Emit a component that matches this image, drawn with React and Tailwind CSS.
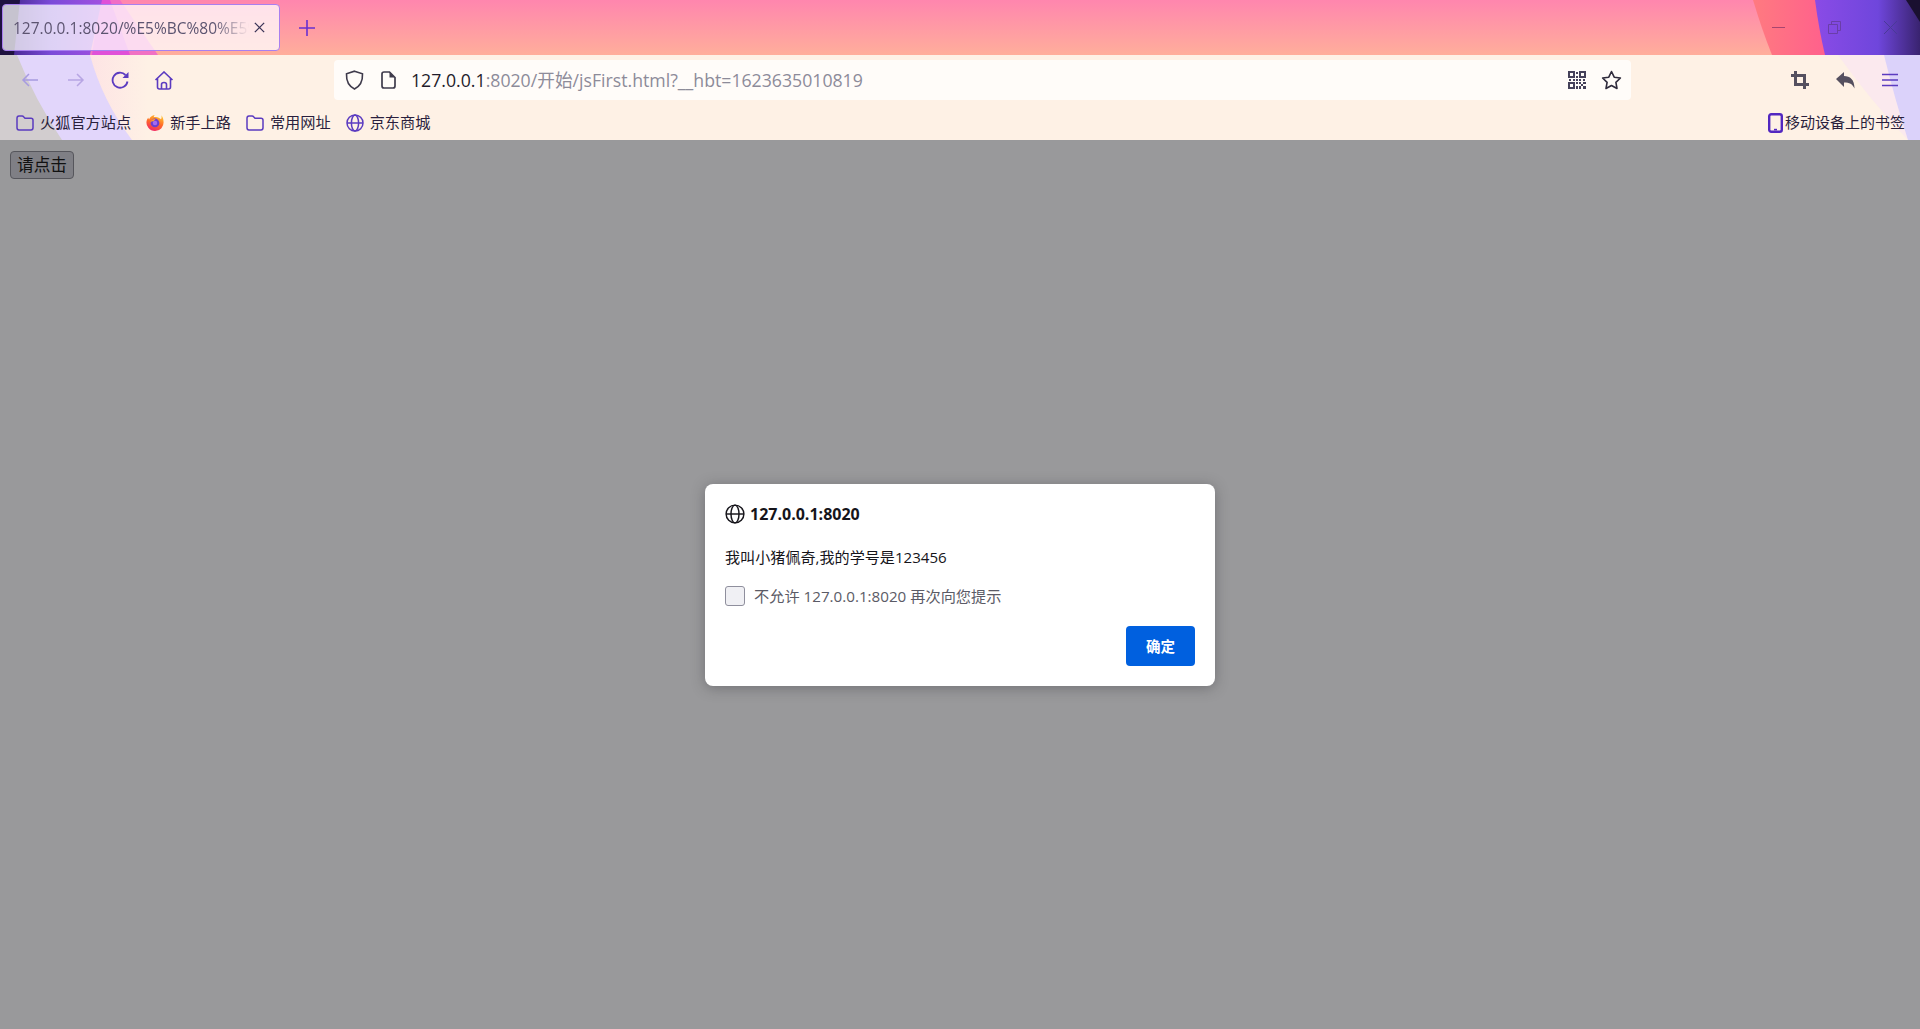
import React from "react";

const P = "#5b3bc0";

function ThemeBackdrop() {
  return (
    <svg className="absolute inset-0" width="1920" height="140" viewBox="0 0 1920 140" preserveAspectRatio="none">
      <defs>
        <linearGradient id="sky" x1="0" y1="0" x2="0" y2="1">
          <stop offset="0" stopColor="#ff86ae" />
          <stop offset="1" stopColor="#ffae9b" />
        </linearGradient>
        <linearGradient id="rp" x1="0" y1="0" x2="1" y2="0">
          <stop offset="0" stopColor="#8a4be6" />
          <stop offset="0.6" stopColor="#6f46dc" />
          <stop offset="1" stopColor="#39236f" />
        </linearGradient>
        <linearGradient id="rm" x1="0" y1="0" x2="1" y2="0">
          <stop offset="0" stopColor="#ff7a80" />
          <stop offset="1" stopColor="#ff3f9c" />
        </linearGradient>
        <linearGradient id="lp" x1="0" y1="0" x2="1" y2="0">
          <stop offset="0" stopColor="#3a1f80" />
          <stop offset="0.5" stopColor="#7a4ad8" />
          <stop offset="1" stopColor="#a050e0" />
        </linearGradient>
        <linearGradient id="pinkfade" x1="0" y1="0" x2="1" y2="0">
          <stop offset="0" stopColor="#fcd8ea" />
          <stop offset="0.5" stopColor="#fde0e4" />
          <stop offset="1" stopColor="#fef1e5" />
        </linearGradient>
      </defs>
      <rect width="1920" height="55" fill="url(#sky)" />
      <path d="M100 0 L120 0 L158 55 L90 55 Z" fill="#f06ac8" opacity="0.9" />
      <path d="M130 55 L110 0 L100 0 L92 55 Z" fill="#e050d8" />
      <path d="M0 0 L102 0 L90 55 L0 55 Z" fill="url(#lp)" />
      <path d="M0 0 L20 0 L14 55 L0 55 Z" fill="#1f1240" />
      <path d="M1753 0 Q1762 30 1772 55 L1920 55 L1920 0 Z" fill="url(#rm)" />
      <path d="M1815 0 Q1819 30 1825 55 L1920 55 L1920 0 Z" fill="url(#rp)" />
      <path d="M1906 0 L1920 0 L1920 22 Z" fill="#1a1030" />
      <rect y="55" width="1920" height="85" fill="#fef1e5" />
      <rect y="55" width="148" height="85" fill="url(#pinkfade)" />
      <path d="M0 55 L90 55 Q102 100 132 140 L0 140 Z" fill="#e2d6fb" />
      <path d="M0 55 L17 55 Q35 100 62 140 L0 140 Z" fill="#d2cdcf" />
      <path d="M1838 55 L1920 55 L1920 140 L1908 140 Q1870 100 1838 55 Z" fill="#fbe9ee" />
      <path d="M1884 55 L1920 55 L1920 140 L1908 140 Q1895 100 1884 55 Z" fill="#dbd2fa" />
    </svg>
  );
}

const Folder = () => (
  <svg width="18" height="16" viewBox="0 0 18 16" fill="none" stroke={P} strokeWidth="1.5" className="shrink-0">
    <path d="M1 3.2C1 2 1.8 1 3 1h3.2c.6 0 1 .2 1.4.7L9 3.2h6c1.1 0 2 .8 2 2v7.6c0 1.2-.9 2.2-2 2.2H3c-1.200 0-2-1-2-2.200z" />
  </svg>
);

const Globe = ({ size = 18, color = P, sw = 1.5 }) => (
  <svg width={size} height={size} viewBox="0 0 18 18" fill="none" stroke={color} strokeWidth={sw} className="shrink-0">
    <circle cx="9" cy="9" r="8" />
    <ellipse cx="9" cy="9" rx="3.600" ry="8" />
    <path d="M1 9h16" />
  </svg>
);

const FirefoxIcon = () => (
  <svg width="18" height="19" viewBox="0 0 19 19" className="shrink-0">
    <defs>
      <linearGradient id="ff" x1="0.7" y1="0" x2="0.3" y2="1">
        <stop offset="0" stopColor="#ffc52e" />
        <stop offset="0.5" stopColor="#ff6a28" />
        <stop offset="1" stopColor="#f0246a" />
      </linearGradient>
    </defs>
    <path d="M9.500 18.500A9 9 0 0 1 .7 7.600C1.300 5.800 2 5 2.500 4.600c0 1 .4 1.400.7 1.700C4.200 3.600 6.500 2 9.200 1.500c-.8 1-1 1.800-.9 2.300 3-.7 6 .3 7.500 2.300.9-1.200.8-3 .3-4.300 1.500 1.600 2.400 4 2.400 6.600a9 9 0 0 1-9 10.100z" fill="url(#ff)" />
    <circle cx="9.500" cy="10" r="4.600" fill="#6b3fd0" />
    <circle cx="9.500" cy="10" r="2.400" fill="#a56cf0" />
    <path d="M4.500 9.500c.5-2.500 3-4 5.500-3.500-1 .6-1.500 1.200-1.500 2-1.800.2-3 .6-4 1.500z" fill="#ff9a2e" />
  </svg>
);

function Bookmark({ icon, label }) {
  return (
    <div className="flex items-center gap-[6px] text-[15.200px] text-[#2a1f3d] leading-none">
      {icon}
      <span className="whitespace-nowrap">{label}</span>
    </div>
  );
}

export default function App() {
  return (
    <div className="relative h-[1029px] w-[1920px] overflow-hidden bg-[#99999b] font-['Open_Sans','Noto_Sans_CJK_SC',sans-serif]">
      <header className="relative h-[140px]">
        <ThemeBackdrop />
        <div className="relative flex h-[55px] items-center pl-[2px]">
          <div className="flex h-[47px] w-[278px] items-center rounded-[4px] border border-[#a87fef] bg-[#ffffff]/75 pl-[10px] pr-[10px]">
            <div className="h-[22px] w-[236px] overflow-hidden whitespace-nowrap text-[15.500px] leading-[22px] text-[#5c5470] [mask-image:linear-gradient(to_right,black_85%,transparent)]">
              127.0.0.1:8020/%E5%BC%80%E5%A7%8B/jsFirst.html
            </div>
            <svg width="13" height="13" viewBox="0 0 14 14" stroke="#3b3458" strokeWidth="1.400" className="ml-[4px]">
              <path d="M2 2l10 10M12 2L2 12" />
            </svg>
          </div>
          <svg width="16" height="16" viewBox="0 0 16 16" stroke="#6a2fd0" strokeWidth="1.600" className="ml-[19px]">
            <path d="M8 0v16M0 8h16" />
          </svg>
        </div>

        <div className="relative flex h-[50px] items-center">
          <div className="flex w-[334px] items-center pl-[21px]">
            <svg width="18" height="16" viewBox="0 0 18 16" fill="none" stroke="#a79be0" strokeWidth="1.500">
              <path d="M17 8H2M8 2L2 8l6 6" />
            </svg>
            <svg width="18" height="16" viewBox="0 0 18 16" fill="none" stroke="#b7a5e4" strokeWidth="1.500" className="ml-[28px]">
              <path d="M1 8h15M10 2l6 6-6 6" />
            </svg>
            <svg width="19" height="19" viewBox="0 0 19 19" fill="none" stroke={P} strokeWidth="1.800" className="ml-[26px]">
              <path d="M16.500 10.500A7.500 7.500 0 1 1 14.500 4" />
              <path d="M17.500 1v6h-6z" fill={P} stroke="none" />
            </svg>
            <svg width="20" height="19" viewBox="0 0 20 19" fill="none" stroke={P} strokeWidth="1.600" className="ml-[24px]">
              <path d="M1.500 9L10 1l8.500 8M3.500 7.500V16c0 1 .7 2 2 2h9c1.300 0 2-1 2-2V7.500" />
              <path d="M7.500 18v-4.500c0-1 .8-2 2.500-2s2.500 1 2.500 2V18" />
            </svg>
          </div>
          <div className="flex h-[40px] w-[1297px] items-center rounded-[4px] bg-[#fffcf9] pl-[11px]">
            <svg width="19" height="20" viewBox="0 0 19 20" fill="none" stroke="#3f3b4c" strokeWidth="1.600">
              <path d="M9.500 1.200L17.500 3.800c.3 6.500-1.500 12-8 15.200C3 15.800 1.200 10.300 1.500 3.800z" />
            </svg>
            <svg width="15" height="18" viewBox="0 0 15 18" fill="none" stroke="#3f3b4c" strokeWidth="1.700" className="ml-[17px]">
              <path d="M3 1h5.500L14 6.500V15c0 1.200-.8 2-2 2H3c-1.200 0-2-.8-2-2V3c0-1.200.8-2 2-2z" />
              <path d="M8.500 1v5.500H14" fill="#3f3b4c" stroke="none" />
            </svg>
            <div className="ml-[15px] whitespace-nowrap text-[17.700px] text-[#8d8b99]">
              <span className="text-[#1f1c2b]">127.0.0.1</span>:8020/开始/jsFirst.html?__hbt=1623635010819
            </div>
            <div className="flex-1" />
            <svg width="18" height="18" viewBox="0 0 18 18" fill="#45415a" className="-mr-[1px]">
              <path d="M0 0h7v7H0zM2 2v3h3V2zM11 0h7v7h-7zM13 2v3h3V2zM0 11h7v7H0zM2 13v3h3v-3z" fillRule="evenodd" />
              <path d="M8 1h2v2H8zM8 5h2v2H8zM1 8h2v2H1zM5 8h2v2H5zM8 8h2v2H8zM11 8h2v2h-2zM15 8h2v2h-2zM8 11h2v2H8zM11 11h2v2h-2zM15 11h3v2h-3zM8 15h2v3H8zM13 13h2v2h-2zM11 15h2v3h-2zM15 15h3v3h-3z" />
            </svg>
            <svg width="21" height="20" viewBox="0 0 21 20" fill="none" stroke="#2f2b3c" strokeWidth="1.600" className="ml-[16px] mr-[9px]">
              <path d="M10.500 1.500l2.700 5.700 6.200.8-4.500 4.300 1.100 6.200-5.500-3-5.500 3 1.100-6.200L1.600 8l6.200-.8z" strokeLinejoin="round" />
            </svg>
          </div>
          <div className="flex flex-1 items-center pl-[160px]">
            <svg width="18" height="18" viewBox="0 0 18 18" fill="none" stroke="#55505f" strokeWidth="3">
              <path d="M0 4.500h13.500V18M4.500 0v13.500H18" />
            </svg>
            <svg width="19" height="17" viewBox="0 0 19 17" fill="#55505f" className="ml-[27px]">
              <path d="M8 0v4c6 0 10.500 3.500 10.500 12.500-2-4.500-5-6-10.500-6v4.500L0 7z" />
            </svg>
            <svg width="16" height="14" viewBox="0 0 16 14" stroke={P} strokeWidth="1.700" className="ml-[27px]">
              <path d="M0 1.500h16M0 7h16M0 12.500h16" />
            </svg>
          </div>
        </div>

        <div className="relative flex h-[35px] items-center justify-between pl-[16px] pr-[15px]">
          <div className="flex items-center gap-[15px]">
            <Bookmark icon={<Folder />} label="火狐官方站点" />
            <Bookmark icon={<FirefoxIcon />} label="新手上路" />
            <Bookmark icon={<Folder />} label="常用网址" />
            <Bookmark icon={<Globe />} label="京东商城" />
          </div>
          <div className="flex items-center gap-[2px] text-[15px] leading-none text-[#2a1f3d]">
            <svg width="15" height="20" viewBox="0 0 15 20" fill="none" className="shrink-0">
              <rect x="1.200" y="1.200" width="12.600" height="17.600" rx="2" stroke="#5227c0" strokeWidth="2.400" />
              <rect x="6" y="15.800" width="3" height="1.600" fill="#5227c0" />
            </svg>
            <span>移动设备上的书签</span>
          </div>
        </div>

        <div className="absolute right-0 top-0 flex h-[55px] items-center pr-[22px]">
          <svg width="13" height="13" viewBox="0 0 13 13" stroke="#a8456f" strokeWidth="1" className="mr-[43px]">
            <path d="M0 6.500h13" />
          </svg>
          <svg width="13" height="13" viewBox="0 0 13 13" fill="none" stroke="#6a3ea8" strokeWidth="1" className="mr-[42px]">
            <path d="M.5 3.500h9v9h-9zM3.500 3.500v-3h9v9h-3" />
          </svg>
          <svg width="15" height="15" viewBox="0 0 15 15" stroke="#4a3a98" strokeWidth="1">
            <path d="M1 1l13 13M14 1L1 14" />
          </svg>
        </div>
      </header>

      <main className="h-[889px] bg-[#99999b] pl-[10px] pt-[11px]">
        <button className="flex h-[28px] w-[64px] items-center justify-center rounded-[4px] border border-[#56565c] bg-[#7f7f85] text-[16.700px] leading-none text-[#111111]">
          请点击
        </button>
      </main>

      <div className="absolute left-[705px] top-[484px] flex h-[202px] w-[510px] flex-col rounded-[8px] bg-white px-[20px] shadow-[0_2px_14px_rgba(40,40,45,0.35)]">
        <div className="mt-[20px] flex h-[20px] items-center gap-[5px] text-[16px] font-bold text-[#15141a]">
          <Globe size={20} color="#15141a" sw={1.300} />
          <span>127.0.0.1:8020</span>
        </div>
        <p className="mt-[23px] h-[20px] whitespace-nowrap text-[15.100px] leading-[20px] text-[#15141a]">
          我叫小猪佩奇,我的学号是123456
        </p>
        <label className="mt-[19px] flex h-[20px] items-center gap-[9px] text-[15.200px] text-[#5b5b66]">
          <span className="block h-[20px] w-[20px] rounded-[3px] border border-[#8f8f9d] bg-[#f0f0f4]" />
          <span>不允许 127.0.0.1:8020 再次向您提示</span>
        </label>
        <div className="mt-[20px] flex justify-end">
          <button className="h-[40px] w-[69px] rounded-[4px] bg-[#0060df] pt-[1px] text-[14.500px] font-bold text-white">确定</button>
        </div>
      </div>
    </div>
  );
}
